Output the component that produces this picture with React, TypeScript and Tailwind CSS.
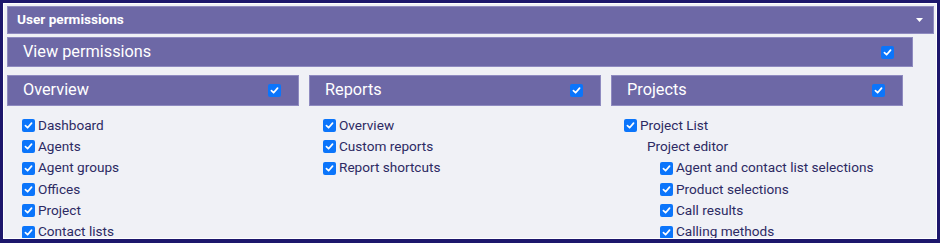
import React from "react";

const Box = () => (
  <span className="inline-flex h-[13px] w-[13px] shrink-0 items-center justify-center rounded-[2px] bg-[#0b75fb]">
    <svg width="9" height="9" viewBox="0 0 10 10" fill="none">
      <path d="M1.6 5.2 L4 7.5 L8.4 2.4" stroke="white" strokeWidth="1.9" strokeLinecap="round" strokeLinejoin="round" />
    </svg>
  </span>
);

const Item = ({ label, indent = 0 }: { label: string; indent?: number }) => (
  <div className="flex h-[21.3px] items-center gap-[3px]" style={{ paddingLeft: indent }}>
    <Box />
    <span className="text-[13.6px] leading-none text-[#2d2a63]">{label}</span>
  </div>
);

const ColHeader = ({ title }: { title: string }) => (
  <div className="mr-[10px] flex h-[31px] items-center justify-between border border-[#8f8bc0] bg-[#6d68a6] pl-[15px] pr-[17px]">
    <span className="text-[16.3px] leading-none text-white">{title}</span>
    <Box />
  </div>
);

export default function App() {
  return (
    <div
      className="h-[243px] w-[940px] overflow-hidden bg-[#1d176c] pb-[4px] pl-[3px] pr-[3px] pt-[3px]"
      style={{ fontFamily: "Roboto, 'Liberation Sans', sans-serif" }}
    >
      <div className="h-full w-full overflow-hidden border border-white bg-[#f0f1f6] pl-[3px] pr-[2px] pt-[2px]">
        <div className="flex h-[28px] items-center justify-between border border-[#8f8bc0] bg-[#6d68a6] pl-[9px] pr-[10px]">
          <span className="text-[13.6px] font-bold leading-none text-white">User permissions</span>
          <svg width="7" height="4" viewBox="0 0 7 4">
            <path d="M0 0 H7 L3.5 4 Z" fill="white" />
          </svg>
        </div>
        <div className="mt-[3px] w-[906px]">
          <div className="flex h-[30px] items-center justify-between border border-[#8f8bc0] bg-[#6d68a6] pl-[15px] pr-[18px]">
            <span className="text-[16.3px] leading-none text-white">View permissions</span>
            <Box />
          </div>
          <div className="mt-[8px] grid grid-cols-3">
            <div>
              <ColHeader title="Overview" />
              <div className="pl-[15px] pt-[9px]">
                <Item label="Dashboard" />
                <Item label="Agents" />
                <Item label="Agent groups" />
                <Item label="Offices" />
                <Item label="Project" />
                <Item label="Contact lists" />
              </div>
            </div>
            <div>
              <ColHeader title="Reports" />
              <div className="pl-[14px] pt-[9px]">
                <Item label="Overview" />
                <Item label="Custom reports" />
                <Item label="Report shortcuts" />
              </div>
            </div>
            <div>
              <ColHeader title="Projects" />
              <div className="pl-[13px] pt-[9px]">
                <Item label="Project List" />
                <div className="flex h-[21.3px] items-center pl-[23px]">
                  <span className="text-[13.6px] leading-none text-[#2d2a63]">Project editor</span>
                </div>
                <Item label="Agent and contact list selections" indent={36} />
                <Item label="Product selections" indent={36} />
                <Item label="Call results" indent={36} />
                <Item label="Calling methods" indent={36} />
              </div>
            </div>
          </div>
        </div>
      </div>
    </div>
  );
}
